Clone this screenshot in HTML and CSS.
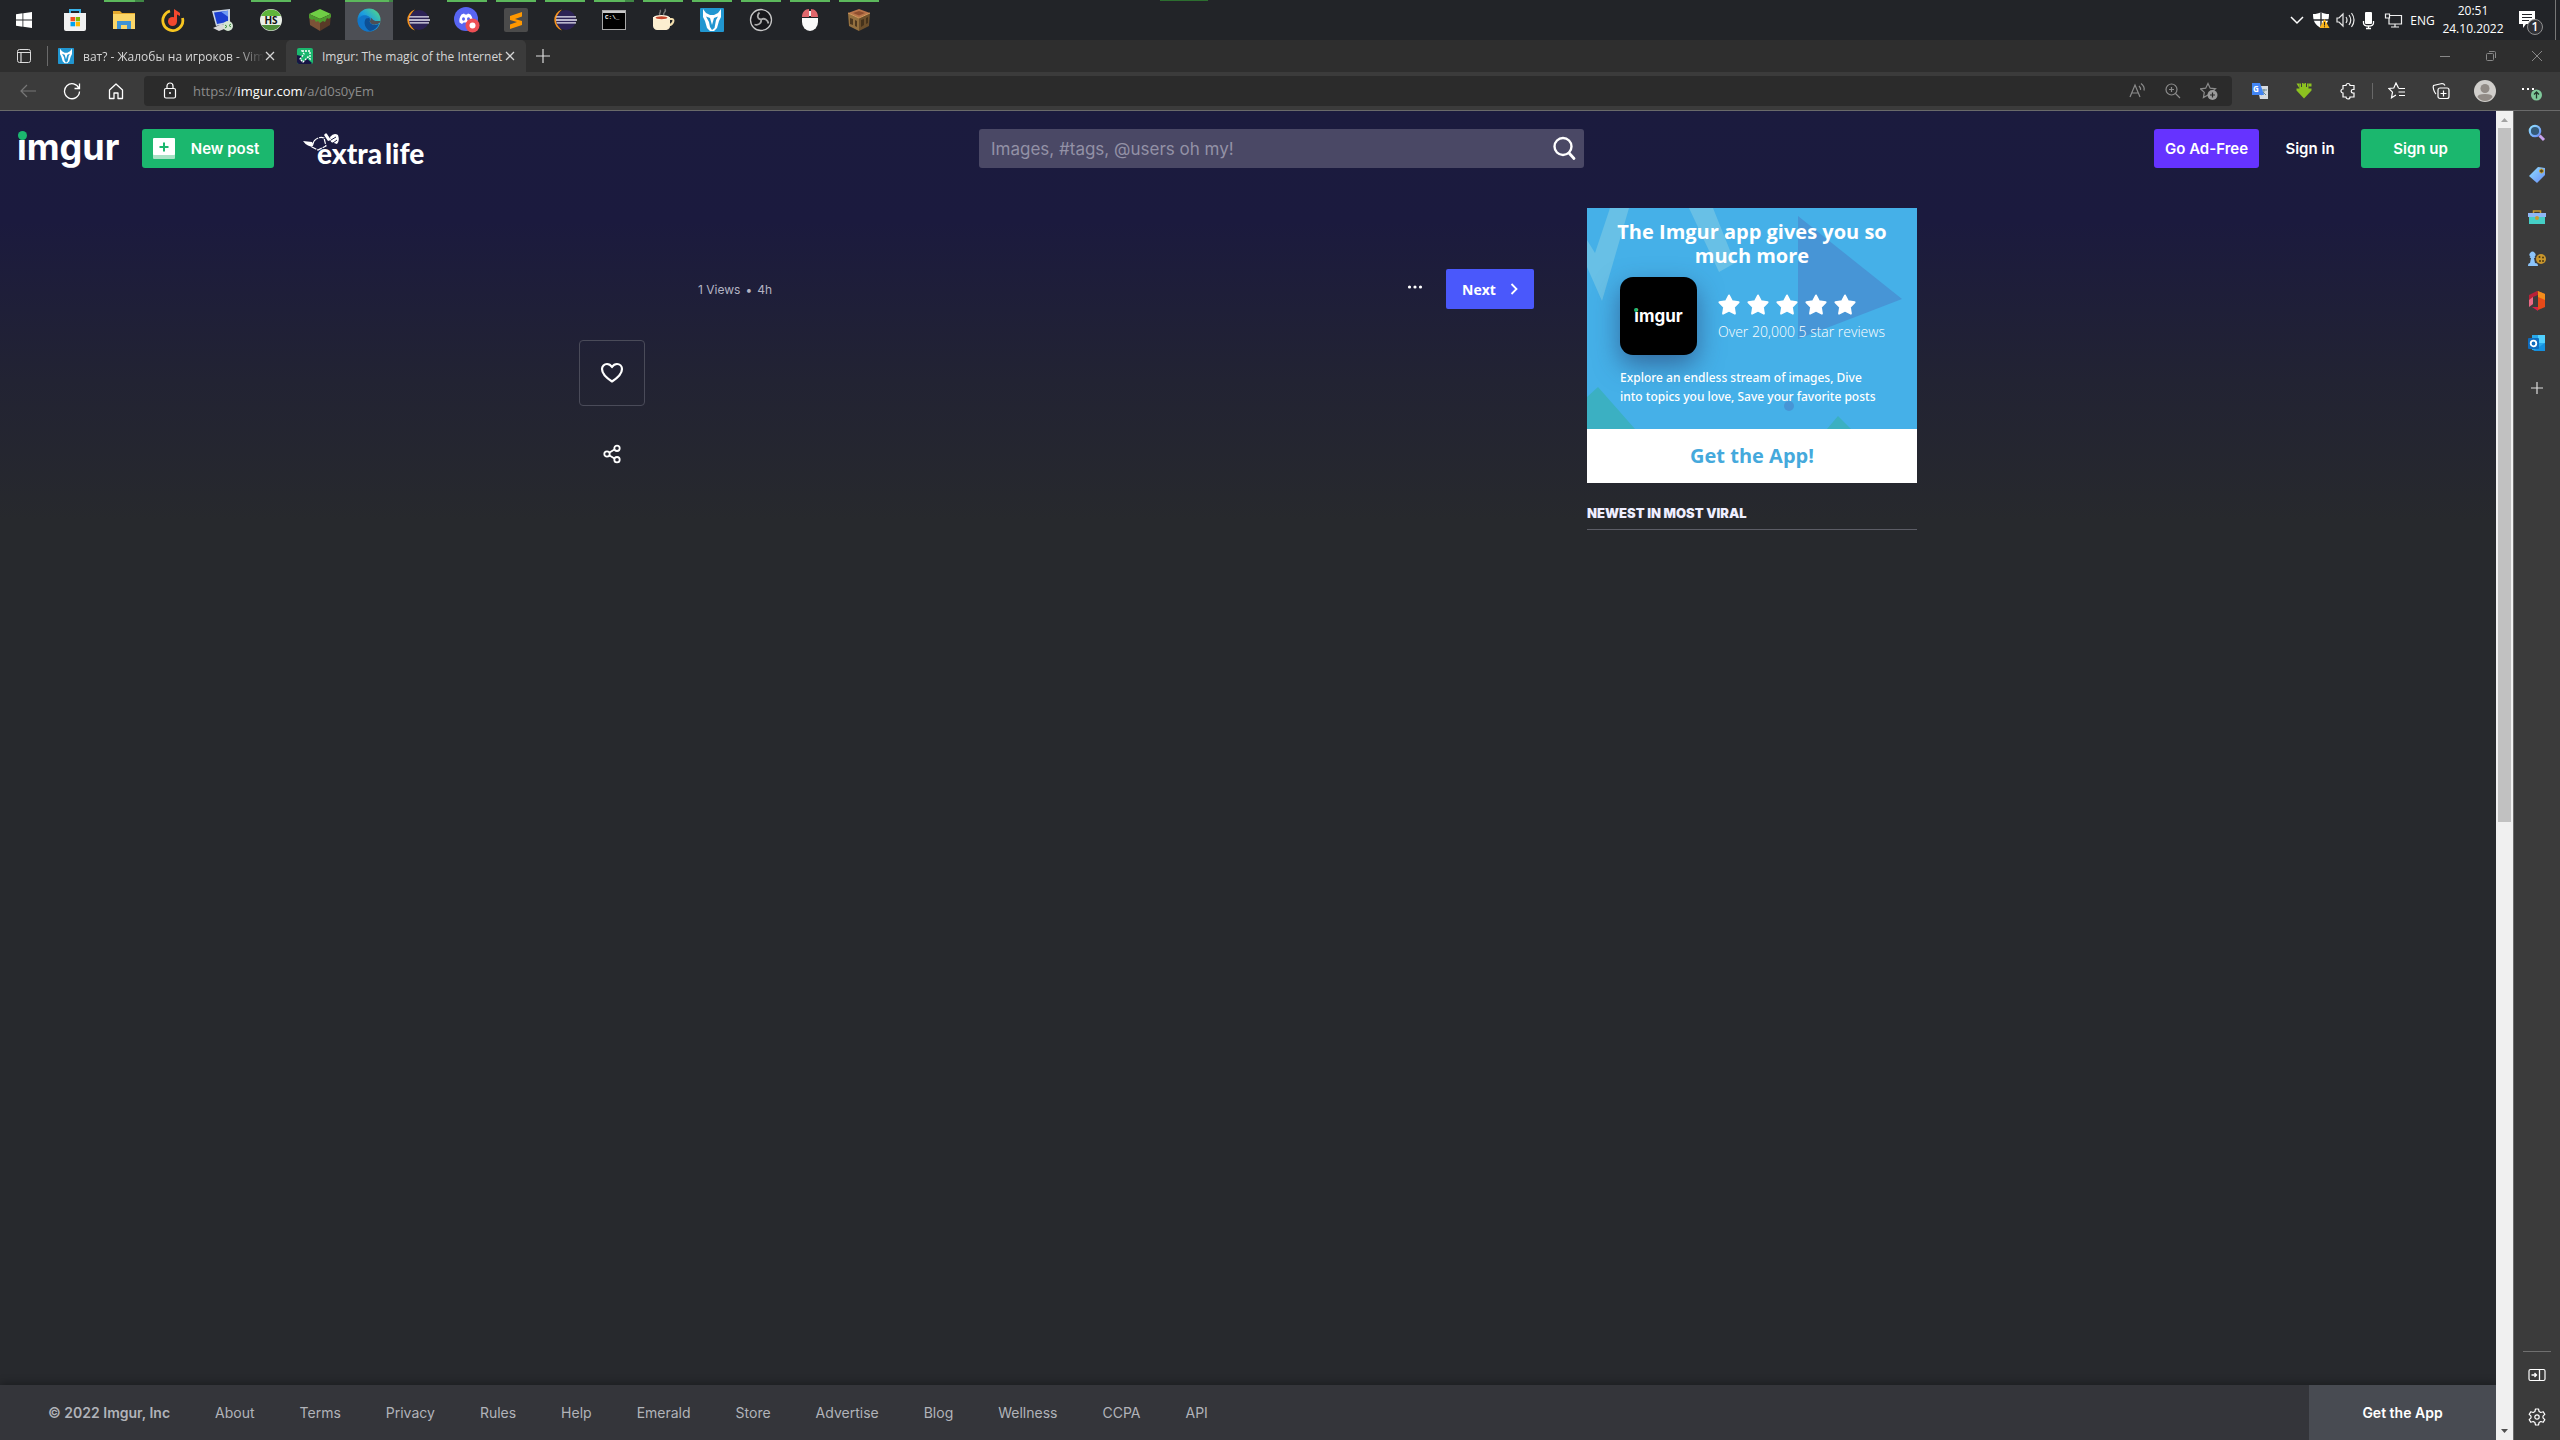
FILE: index.html
```html
<!DOCTYPE html>
<html lang="en">
<head>
<meta charset="utf-8">
<title>Imgur: The magic of the Internet</title>
<link rel="stylesheet" href="styles.css">
</head>
<body>
<svg class="defs" aria-hidden="true">
  <defs>
    <symbol id="eclipse" viewBox="0 0 24 24"><path d="M9 1.500a11 11 0 0 0 0 21a14 14 0 0 1 0-21z" fill="#f7941e"/><circle cx="13" cy="12" r="10" fill="#2c2255"/><path d="M3.500 8.300h19.500v1.300H3zM3 11.200h21v1.500H3zM3.500 14.300h19.500v1.300H4z" fill="#e8e6f2"/></symbol>
    <symbol id="vime" viewBox="0 0 24 24"><rect width="24" height="24" rx="1" fill="#2196d0"/><path d="M3 1l3 4 4 2h4l4-2 3-4v8l-2 4-2 7-3 3h-4l-3-3-2-7-2-4z" fill="#fff"/><path d="M6 8.500l4 1.500 2 7 2-7 4-1.500-2 3.500-1.500 8-2.500 2-2-3-1-5z" fill="#2196d0"/></symbol>
    <symbol id="star" viewBox="0 0 24 24"><path d="M12 1.500l3.300 6.400 7.200 1.100-5.100 5.200 1.100 7.300L12 18.200l-6.500 3.300 1.100-7.300L1.500 9l7.200-1.100z" fill="#fff" stroke="#fff" stroke-width="2" stroke-linejoin="round"/></symbol>
    <symbol id="close" viewBox="0 0 10 10"><path d="M1 1l8 8M9 1L1 9" stroke="currentColor" stroke-width="1.300" fill="none"/></symbol>
    <linearGradient id="edge" x1="0" y1="1" x2="1" y2="0"><stop offset="0" stop-color="#0c59a4"/><stop offset=".5" stop-color="#1b9de2"/><stop offset="1" stop-color="#5be07a"/></linearGradient>
    <linearGradient id="sky" x1="0" y1="0" x2="1" y2="1"><stop offset="0" stop-color="#8fe0ff"/><stop offset="1" stop-color="#6a8df5"/></linearGradient>
  </defs>
</svg>

<header class="taskbar">
  <nav class="apps" aria-label="Taskbar">
    <button class="app" aria-label="Start"><svg width="16" height="16" viewBox="0 0 16 16"><path d="M0 2.200l6.500-.9v6.200H0zM7.300 1.200L16 0v7.500H7.300zM0 8.400h6.500v6.300L0 13.800zM7.300 8.400H16V16l-8.700-1.200z" fill="#fff"/></svg></button>
    <button class="app" aria-label="Store"><svg width="24" height="24" viewBox="0 0 24 24"><path d="M7 6V2h10v4" fill="none" stroke="#39b3e8" stroke-width="2"/><path d="M1 5h22v16a2 2 0 0 1-2 2H3a2 2 0 0 1-2-2z" fill="#f1f1f1"/><path d="M7.500 9H12v4.300H7.500z" fill="#f05022"/><path d="M12.700 9H17v4.300h-4.300z" fill="#7fba00"/><path d="M7.500 14H12v4.300H7.500z" fill="#00a4ef"/><path d="M12.700 14H17v4.300h-4.300z" fill="#ffb900"/></svg></button>
    <button class="app run multi" aria-label="Explorer"><svg width="24" height="24" viewBox="0 0 24 24"><path d="M1 3h7l2 2h13v5H1z" fill="#e5a92d"/><path d="M1 6h22v15H1z" fill="#fbd668"/><path d="M5 21v-8h14v8h-4v-4H9v4z" fill="#3f93d6"/></svg></button>
    <button class="app" aria-label="Music"><svg width="24" height="24" viewBox="0 0 24 24"><path d="M9 3A10 10 0 1 0 21.500 10" fill="none" stroke="#f7c520" stroke-width="2.800"/><circle cx="11.500" cy="13.500" r="4.500" fill="#f4482e"/><path d="M13 14V1l6 4v3l-3-1.500v7z" fill="#f4482e"/></svg></button>
    <button class="app" aria-label="Remote desktop"><svg width="24" height="24" viewBox="0 0 24 24"><path d="M2 3l18-2v14L6 18z" fill="#c9d4e4"/><path d="M4 4.500l14-1.700v11L7 16z" fill="#1c3fd0"/><path d="M11 3.700l7-.9v6z" fill="#6f9bf3"/><path d="M3 20l9-4 5 4-8 3z" fill="#d8d8d8"/><circle cx="18" cy="18" r="5" fill="#d5e6d2"/><path d="M15 17l2 1.500-2 1.500M21 16l-2 1.500 2 1.500" stroke="#3a8b3a" fill="none"/></svg></button>
    <button class="app run" aria-label="HS"><svg width="24" height="24" viewBox="0 0 24 24"><circle cx="12" cy="12" r="11" fill="#e9efe6"/><path d="M2 8a11 11 0 0 1 20 0z" fill="#5fb63b"/><path d="M2.500 17a11 11 0 0 0 19 0z" fill="#4e8e3a"/><text x="12" y="16" text-anchor="middle" class="hs">HS</text></svg></button>
    <button class="app" aria-label="Minecraft"><svg width="24" height="24" viewBox="0 0 24 24"><path d="M12 1l11 5-11 5L1 6z" fill="#6fce45"/><path d="M1 6l11 5v12L2 17z" fill="#7c5237"/><path d="M23 6l-11 5v12l10-6z" fill="#593a27"/><path d="M1 6l11 5v4l-2-2-2 1-2-3-2 1-3-2zM23 6l-11 5v4l3-2 2 1 2-4 2 1 2-2z" fill="#4c9c2e"/></svg></button>
    <button class="app run active" aria-label="Edge"><svg width="24" height="24" viewBox="0 0 24 24"><circle cx="12" cy="12" r="11.500" fill="url(#edge)"/><path d="M.7 13C2 7 9 6 12.500 9c2 2 1 3 0 4.500 1 4 6 4.500 9.500 2.500-3 7-11 9-16 6-3.500-2-5.500-6-5.300-9z" fill="#1175c9"/><path d="M9 10.500c-3 4-1 10 4 12.500 4-.5 7-3 9-7-4 2-9 1-9.500-2.500.8-1 .4-3-.5-3.500z" fill="#0d4f95"/><path d="M12.500 13.500c1-1.500 2-2.500 1-4 2 1.500 3 3 5 3.500h5c0 3-7 5-9.500 2.500z" fill="#4d4f55"/></svg></button>
    <button class="app" aria-label="Eclipse"><svg width="24" height="24"><use href="#eclipse"/></svg></button>
    <button class="app run" aria-label="Discord"><svg width="26" height="26" viewBox="0 0 26 26"><circle cx="12" cy="12" r="12" fill="#5865f2"/><path d="M7.500 7.500l2.500-1 1 1h2l1-1 2.500 1c2 3 2.500 5 2 8l-2.500 1.500-1.500-1.500h-5L8 17l-2.500-1.500c-.5-3 0-5 2-8z" fill="#fff"/><ellipse cx="9.500" cy="12" rx="1.500" ry="1.800" fill="#5865f2"/><ellipse cx="14.500" cy="12" rx="1.500" ry="1.800" fill="#5865f2"/><circle cx="18.500" cy="18.500" r="7" fill="#ed4f54"/><circle cx="18.500" cy="18.500" r="3" fill="#fff"/></svg></button>
    <button class="app run" aria-label="Sublime Text"><svg width="24" height="24" viewBox="0 0 24 24"><rect width="24" height="24" rx="2" fill="#4b4b4b"/><path d="M6 8l12-4v4.500L11 11l7 2v4L6 21v-4.500l7-2.500-7-2z" fill="#ff9800"/></svg></button>
    <button class="app run" aria-label="Eclipse workspace"><svg width="24" height="24"><use href="#eclipse"/></svg></button>
    <button class="app run multi" aria-label="Terminal"><svg width="24" height="20" viewBox="0 0 24 20"><rect x=".5" y=".5" width="23" height="19" fill="#000" stroke="#a8a8a8"/><path d="M1 1h22v2H1z" fill="#c9c9c9"/><text x="3" y="9" class="cmd">C:\_</text></svg></button>
    <button class="app run" aria-label="Java"><svg width="24" height="24" viewBox="0 0 24 24"><path d="M9 7c-2-2 2-3 0-5M13 7c-2-2 3-3 1-6" stroke="#777" fill="none" stroke-width="1.500"/><path d="M18 11h3c3 0 1 6-3 6" fill="none" stroke="#f3dfae" stroke-width="2"/><path d="M2 9h17v9c0 3-3 4-4 4H6c-2 0-4-2-4-4z" fill="#fbeed0"/><ellipse cx="10.500" cy="9.500" rx="8" ry="2.500" fill="#fff6e0"/><ellipse cx="10.500" cy="9.700" rx="6" ry="1.500" fill="#c4452a"/></svg></button>
    <button class="app run" aria-label="VimeWorld"><svg width="24" height="24"><use href="#vime"/></svg></button>
    <button class="app run" aria-label="OBS"><svg width="24" height="24" viewBox="0 0 24 24"><circle cx="12" cy="12" r="10.500" fill="#17171b" stroke="#c7c7c7" stroke-width="1.300"/><path d="M12 11.500C8 11 8 7 10.500 4.500M12 11.500c3.500-2 7 .5 7.500 4M12 11.500c1 4-3 6-6.500 5" stroke="#aaa" fill="none" stroke-width="1.800"/></svg></button>
    <button class="app run" aria-label="Mouse"><svg width="24" height="24" viewBox="0 0 24 24"><path d="M4 10h16v4a8 9 0 0 1-16 0z" fill="#fafafa"/><path d="M4 9c0-5 3-8 7-8v8zM20 9c0-5-3-8-7-8v8z" fill="#e0676c"/><path d="M11 3h2v5h-2z" fill="#eee"/></svg></button>
    <button class="app run" aria-label="Crafting"><svg width="24" height="24" viewBox="0 0 24 24"><path d="M12 1l11 4-11 5L1 5z" fill="#b9744a"/><path d="M1 5l11 5v13L2 18z" fill="#94703f"/><path d="M23 5l-11 5v13l10-5z" fill="#6c4f2b"/><path d="M3 10l3 1v6l-3-1zM8 12l2 1v6l-2-1zM14 12l3-1v6l-3 2zM19 10l2-1v6l-2 1z" fill="#3c2b18" opacity=".8"/><path d="M6 5l6-2 6 2-6 2.500z" fill="#8f4f30"/><path d="M1 5l11 5 11-5" stroke="#d49a5c" fill="none"/></svg></button>
  </nav>
  <span class="progress"></span>
  <div class="tray">
    <svg width="24" height="24" viewBox="0 0 24 24"><path d="M6 9l6 6 6-6" stroke="#fff" stroke-width="1.500" fill="none"/></svg>
    <svg width="24" height="24" viewBox="0 0 24 24"><path d="M12 4c2 1.500 5 2 8 2 0 7-2 11-8 14-6-3-8-7-8-14 3 0 6-.5 8-2z" fill="#fff"/><path d="M12 4v16M4 12h16" stroke="#222428" stroke-width="1.300"/><path d="M15.500 11l5 9h-10z" fill="#f9b21b"/><path d="M15.500 14v3.500m0 .8v1" stroke="#222"/></svg>
    <svg width="24" height="24" viewBox="0 0 24 24"><path d="M4 10h2l4-4v12l-4-4H4zM13 9q2 3 0 6M16 7q3.500 5 0 10M18.500 5q5 7 0 14" stroke="#e8e8e8" fill="none" stroke-width="1.200"/></svg>
    <svg width="24" height="24" viewBox="0 0 24 24"><rect x="8" y="4" width="7" height="12" rx="1" fill="#fff"/><path d="M6.500 13v2q0 3 5 3t5-3v-2M11.500 18v2M9 20.500h5" stroke="#fff" fill="none" stroke-width="1.300"/></svg>
    <svg width="24" height="24" viewBox="0 0 24 24"><path d="M9 7.500h11.500v8.500H8v-6M4.500 6h4v4h-4zM14 16v3M10 19h8" stroke="#f0f0f0" fill="none" stroke-width="1.200"/></svg>
    <span class="lang">ENG</span>
    <time class="clock" datetime="2022-10-24T20:51">20:51<br>24.10.2022</time>
    <button class="notify" aria-label="Notifications"><svg width="26" height="26" viewBox="0 0 26 26"><path d="M1 1h16v13H8l-3 4v-4H1z" fill="#fff"/><path d="M4 4.500h10M4 7.500h10M4 10.500h7" stroke="#222428"/><circle cx="17" cy="17" r="7.500" fill="#303136" stroke="#909090"/><text x="17" y="21" text-anchor="middle" class="count">1</text></svg></button>
  </div>
</header>

<div class="tabs">
  <button class="actions" aria-label="Tab actions"><svg width="16" height="16" viewBox="0 0 16 16"><rect x="1.500" y="1.500" width="13" height="13" rx="2" stroke="#ddd" fill="none"/><path d="M1.500 4.500h13M5 4.500v10" stroke="#ddd" stroke-width="1.200"/></svg></button>
  <div class="tab">
    <svg width="16" height="16"><use href="#vime"/></svg>
    <span class="tab-title fade" lang="ru">ват? - Жалобы на игроков - Vim</span>
    <button aria-label="Close tab"><svg width="10" height="10"><use href="#close"/></svg></button>
  </div>
  <div class="tab current">
    <svg width="16" height="16" viewBox="0 0 16 16"><rect width="16" height="16" rx="2" fill="#1bb76e"/><path d="M0 7l8 2 7 6-1 1H2a2 2 0 0 1-2-2z" fill="#171544"/><path d="M5 3h8v8l-2-2-5 5-3-3 4-5z" fill="#1bb76e" stroke="#fff" stroke-width="1.300" stroke-dasharray="2 1"/></svg>
    <span class="tab-title">Imgur: The magic of the Internet</span>
    <button aria-label="Close tab"><svg width="10" height="10"><use href="#close"/></svg></button>
  </div>
  <button class="new-tab" aria-label="New tab"><svg width="16" height="16" viewBox="0 0 16 16"><path d="M8 1v14M1 8h14" stroke="#ddd" stroke-width="1.200"/></svg></button>
  <div class="window-buttons">
    <button aria-label="Minimize"><svg width="12" height="12" viewBox="0 0 12 12"><path d="M1 6.500h10" stroke="#888"/></svg></button>
    <button aria-label="Restore"><svg width="12" height="12" viewBox="0 0 12 12"><rect x="1.500" y="3.500" width="7" height="7" rx="1" fill="none" stroke="#888"/><path d="M4 1.500h5.500a1 1 0 0 1 1 1V8" fill="none" stroke="#888"/></svg></button>
    <button aria-label="Close"><svg width="12" height="12" viewBox="0 0 12 12"><path d="M1 1l10 10M11 1L1 11" stroke="#888"/></svg></button>
  </div>
</div>

<div class="toolbar">
  <button class="tool" aria-label="Back"><svg width="18" height="18" viewBox="0 0 18 18"><path d="M17 9H2M8 3L2 9l6 6" stroke="#777" fill="none" stroke-width="1.200"/></svg></button>
  <button class="tool" aria-label="Reload"><svg width="18" height="18" viewBox="0 0 18 18"><path d="M16 6.500a7.500 7.500 0 1 0 .5 3M16.500 1.500v5h-5" stroke="#fff" fill="none" stroke-width="1.300"/></svg></button>
  <button class="tool" aria-label="Home"><svg width="18" height="18" viewBox="0 0 18 18"><path d="M2.500 8L9 2l6.500 6v8.500H11V11H7v5.500H2.500z" stroke="#fff" fill="none" stroke-width="1.300" stroke-linejoin="round"/></svg></button>
  <div class="address">
    <svg class="lock" width="18" height="18" viewBox="0 0 18 18"><rect x="3.500" y="6.500" width="11" height="9.500" rx="1.500" stroke="#fff" fill="none" stroke-width="1.200"/><path d="M6 6.500V4a3 3 0 0 1 6 0v2.500" stroke="#fff" fill="none" stroke-width="1.200"/><circle cx="9" cy="11" r="1" fill="#fff"/></svg>
    <span class="url">https://<b>imgur.com</b>/a/d0s0yEm</span>
    <button aria-label="Read aloud"><svg width="18" height="18" viewBox="0 0 18 18"><path d="M2 15L7 3l5 12M4 11h6M11 4q2 2 1.500 4M13 1.500q4 3 3 7" stroke="#8b8b8b" fill="none" stroke-width="1.200"/></svg></button>
    <button aria-label="Zoom"><svg width="18" height="18" viewBox="0 0 18 18"><circle cx="7.500" cy="7.500" r="5.500" stroke="#8b8b8b" fill="none" stroke-width="1.200"/><path d="M11.500 11.500L16 16M7.500 5v5M5 7.500h5" stroke="#8b8b8b" stroke-width="1.200"/></svg></button>
    <button aria-label="Add favourite"><svg width="18" height="18" viewBox="0 0 18 18"><path d="M8 1.500l2.200 4.700 5.300.6-4 3.600 1 5.100L8 13l-4.600 2.600.9-5.200-3.800-3.600 5.200-.6z" stroke="#8b8b8b" fill="none" stroke-width="1.200"/><circle cx="12.500" cy="13" r="5" fill="#9a9a9a"/><path d="M12.500 10.500v5M10 13h5" stroke="#2b2b2b" stroke-width="1.200"/></svg></button>
  </div>
  <button class="tool" aria-label="Translate"><svg width="18" height="18" viewBox="0 0 18 18"><path d="M6 4h11v13H9z" fill="#d7dbe0"/><path d="M10 8h6M13 7v1c0 3-1 4-3 5m2-3 3 3" stroke="#6a8a90" fill="none"/><path d="M1 1h8l4 12H1z" fill="#4285f4"/><text x="2" y="10" class="g">G</text></svg></button>
  <button class="tool" aria-label="Downloads"><svg width="18" height="18" viewBox="0 0 18 18"><path d="M1.500 1.500h3v5h-3l0 2 7.500 8 7.500-8v-2h-3v-5h3v3h-3v2h-1.500V1h-2v4H8V1H6v5.500H4.500z" fill="#8cc220"/><path d="M4.500 1.500h9v8h-9z" fill="#8cc220"/><path d="M6.500 1v4M11.500 1v4" stroke="#3b3b3b"/></svg></button>
  <button class="tool" aria-label="Extensions"><svg width="18" height="18" viewBox="0 0 18 18"><path d="M4 3.500h3a2 2 0 0 1 4 0h4v4h-1a1.700 1.700 0 0 0 0 3.500h1v4h-4a2 2 0 0 1-4 0H4v-4a2 2 0 0 1 0-4z" stroke="#fff" fill="none" stroke-width="1.200"/></svg></button>
  <span class="rule"></span>
  <button class="tool" aria-label="Favourites"><svg width="18" height="18" viewBox="0 0 18 18"><path d="M10.500 6L8 1 5.800 6l-5 .5 3.700 3.700-1 5.500L8 13M10.500 6.500H17M10.500 10H17M11 13.500h6" stroke="#fff" fill="none" stroke-width="1.200"/></svg></button>
  <button class="tool" aria-label="Collections"><svg width="18" height="18" viewBox="0 0 18 18"><rect x="6" y="6" width="11" height="10.500" rx="2" stroke="#fff" fill="none" stroke-width="1.200"/><path d="M11.500 8.500v6M8.500 11.500h6M4 12C2 10 .5 5 1.500 3.500L10 1.500q2 0 3 2" stroke="#fff" fill="none" stroke-width="1.200"/></svg></button>
  <button class="tool" aria-label="Profile"><svg width="22" height="22" viewBox="0 0 22 22"><circle cx="11" cy="11" r="11" fill="#d0cecb"/><circle cx="11" cy="8.500" r="4.500" fill="#918b86"/><path d="M3.500 17q0-3 7.500-3t7.500 3q-3 4-7.500 4t-7.500-4z" fill="#918b86"/></svg></button>
  <button class="tool more" aria-label="More"><svg width="22" height="22" viewBox="0 0 22 22"><path d="M2 9h2M7 9h2M12 9h2" stroke="#fff" stroke-width="2"/><circle cx="16.500" cy="15" r="5.500" fill="#7fc99a"/><path d="M16.500 18.500v-6M14 14.500l2.500-2.500 2.500 2.500" stroke="#23352a" fill="none" stroke-width="1.300"/></svg></button>
</div>

<div class="browser">
  <div class="page">
    <header class="site-header">
      <div class="brand">
        <a class="logo" href="#">imgur</a>
        <button class="new-post"><svg width="22" height="22" viewBox="0 0 22 22"><path d="M0 15h22v5a1 1 0 0 1-1 1H1a1 1 0 0 1-1-1z" fill="#a9e2c6"/><rect width="22" height="17" rx="1" fill="#fff"/><path d="M11 4.500v9M6.500 9h9" stroke="#1bb76e" stroke-width="2"/></svg>New post</button>
        <a class="extra" href="#"><svg width="38" height="22" viewBox="0 0 38 22"><path d="M0 9l9 1 3 5Q4 15 0 9z" fill="#fff"/><path d="M11 9q5-5 10-3l2 8-8 4-6-3z" fill="#1b1b40" stroke="#fff" stroke-width="1.200" stroke-dasharray="5 1"/><path d="M21 3q2-3 3-1l4 6-3 1zM27 5q4-5 8-2 2 6-1 9l-6-2z" fill="#fff"/><path d="M28 8l5-3M30 11l4-3M13 12l3 1M19 9l2 2" stroke="#1b1b40"/></svg><span>extra</span><span>life</span></a>
      </div>
      <form class="search">
        <input type="search" aria-label="Search" placeholder="Images, #tags, @users oh my!">
        <button type="button" aria-label="Submit search"><svg width="24" height="26" viewBox="0 0 24 26"><circle cx="11" cy="11.500" r="8.500" fill="none" stroke="#fff" stroke-width="2.400"/><path d="M17 18l5 5.500" stroke="#fff" stroke-width="2.800" stroke-linecap="round"/></svg></button>
      </form>
      <div class="account">
        <button class="ad-free">Go Ad-Free</button>
        <a class="sign-in" href="#">Sign in</a>
        <button class="sign-up">Sign up</button>
      </div>
    </header>

    <main class="gallery">
      <div class="engage">
        <button class="heart" aria-label="Favourite"><svg width="24" height="22" viewBox="0 0 24 22"><path d="M12 19.500Q2 13 2 7a5 5 0 0 1 5-5q3 0 5 3 2-3 5-3a5 5 0 0 1 5 5q0 6-10 12.500z" fill="none" stroke="#fff" stroke-width="2.200" stroke-linejoin="round"/></svg></button>
        <button class="share" aria-label="Share"><svg width="18" height="20" viewBox="0 0 18 20"><path d="M4 10l10-6M4 10l10 6" stroke="#fff" stroke-width="1.800"/><g fill="#23242f" stroke="#fff" stroke-width="1.800"><circle cx="4" cy="10" r="2.700"/><circle cx="14" cy="4.300" r="2.700"/><circle cx="14" cy="15.700" r="2.700"/></g></svg></button>
      </div>
      <section class="post">
        <p class="meta"><span>1 Views</span><span>•</span><span>4h</span></p>
        <button class="dots" aria-label="Options"><svg width="16" height="4" viewBox="0 0 16 4"><g fill="#fff"><circle cx="2.500" cy="2" r="1.600"/><circle cx="8" cy="2" r="1.600"/><circle cx="13.500" cy="2" r="1.600"/></g></svg></button>
        <button class="next">Next<svg width="8" height="12" viewBox="0 0 8 12"><path d="M1.500 1l5 5-5 5" stroke="#fff" stroke-width="1.800" fill="none"/></svg></button>
      </section>
      <aside class="side">
        <a class="promo" href="#">
          <div class="promo-art">
            <svg class="shapes" viewBox="0 0 330 221" preserveAspectRatio="none" aria-hidden="true"><path d="M0 32l8 13L23 0h19L15 93 0 59zM102 0h24l22 55-16 9z" fill="#68c0e6"/><path d="M211 8l104 83-104 40z" fill="#4795d6"/><path d="M0 189l11-10 37 42H0zM240 221l11-13 13 13z" fill="#3bb0c2"/><circle cx="202" cy="198" r="5" fill="#4795d6"/></svg>
            <h2>The Imgur app gives you so much more</h2>
            <div class="rating">
              <span class="app-icon"><span class="logo small">imgur</span></span>
              <div>
                <div class="stars"><svg width="22" height="22"><use href="#star"/></svg><svg width="22" height="22"><use href="#star"/></svg><svg width="22" height="22"><use href="#star"/></svg><svg width="22" height="22"><use href="#star"/></svg><svg width="22" height="22"><use href="#star"/></svg></div>
                <p class="reviews">Over 20,000 5 star reviews</p>
              </div>
            </div>
            <p class="blurb">Explore an endless stream of images, Dive into topics you love, Save your favorite posts</p>
          </div>
          <strong class="promo-cta">Get the App!</strong>
        </a>
        <h3>NEWEST IN MOST VIRAL</h3>
      </aside>
    </main>

    <footer class="site-footer">
      <nav>
        <b>© 2022 Imgur, Inc</b>
        <a href="#">About</a><a href="#">Terms</a><a href="#">Privacy</a><a href="#">Rules</a><a href="#">Help</a><a href="#">Emerald</a><a href="#">Store</a><a href="#">Advertise</a><a href="#">Blog</a><a href="#">Wellness</a><a href="#">CCPA</a><a href="#">API</a>
      </nav>
      <button class="get-app">Get the App</button>
    </footer>
  </div>

  <div class="scrollbar" aria-hidden="true">
    <svg width="17" height="17" viewBox="0 0 17 17"><path d="M5 11h7L8.500 7z" fill="#a3a3a3"/></svg>
    <span class="thumb"></span>
    <span class="track"></span>
    <svg width="17" height="17" viewBox="0 0 17 17"><path d="M5 6h7l-3.500 4z" fill="#505050"/></svg>
  </div>

  <nav class="sidebar" aria-label="Sidebar">
    <button aria-label="Search"><svg width="18" height="18" viewBox="0 0 18 18"><circle cx="7" cy="7" r="5.200" fill="#345a78" stroke="url(#sky)" stroke-width="2.200"/><path d="M11.500 11.500l4.500 4.500" stroke="#c9a2ee" stroke-width="3"/></svg></button>
    <button aria-label="Shopping"><svg width="18" height="18" viewBox="0 0 18 18"><path d="M10 1l7 1v7l-8 8-8-7z" fill="url(#sky)"/><circle cx="13.500" cy="5" r="2" fill="#5b4a1c" stroke="#c9a53b"/></svg></button>
    <button aria-label="Tools"><svg width="18" height="18" viewBox="0 0 18 18"><path d="M5.500 5V3h7v2" fill="none" stroke="#c99a30" stroke-width="1.500"/><path d="M1 9h16v7H1z" fill="#45cfc6"/><path d="M0 5h18v4H0z" fill="#8fb7f5"/><circle cx="9" cy="10" r="2" fill="#c99a30"/></svg></button>
    <button aria-label="Games"><svg width="18" height="18" viewBox="0 0 18 18"><circle cx="13" cy="9" r="5" fill="#c9962c"/><g fill="#4d3a12"><circle cx="11.500" cy="7" r="1"/><circle cx="15" cy="7.500" r="1"/><circle cx="12" cy="11" r="1"/><circle cx="15" cy="11" r="1"/></g><path d="M0 16q0-3 2-3l1-5H1.500l1-1a3 3 0 1 1 4 0l1 1H6l1 5q3 0 3 3z" fill="#8cc4fa"/></svg></button>
    <button aria-label="Office"><svg width="18" height="20" viewBox="0 0 18 20"><path d="M9 0l8 3v13l-7 3V4z" fill="#e64a19"/><path d="M10 0l7 3v6l-7-3z" fill="#f28c1c"/><path d="M9 0L1 4v11l4-2V6l5-2z" fill="#b92137"/><path d="M1 9l4-3v7l-4 3z" fill="#ea6a86"/><path d="M4 16l6 0v4z" fill="#d81f48"/></svg></button>
    <button aria-label="Outlook"><svg width="18" height="18" viewBox="0 0 18 18"><path d="M4 1h13v15H4z" fill="#28a8ea"/><path d="M10 1h7v8h-7z" fill="#50d0ff"/><path d="M5 17l12-8v8z" fill="#1490df"/><rect x="0" y="4" width="11" height="11" rx="1" fill="#0f6cbd"/><circle cx="5.500" cy="9.500" r="2.800" fill="none" stroke="#fff" stroke-width="1.800"/></svg></button>
    <button class="add" aria-label="Add"><svg width="14" height="14" viewBox="0 0 14 14"><path d="M7 1v12M1 7h12" stroke="#ddd" stroke-width="1.200"/></svg></button>
    <div class="sidebar-end">
      <button aria-label="Hide sidebar"><svg width="18" height="14" viewBox="0 0 18 14"><rect x="1" y="1.500" width="16" height="11" rx="1.500" stroke="#fff" fill="none" stroke-width="1.200"/><path d="M11.500 1.500v11M3.500 7h5M6.500 5l2 2-2 2" stroke="#fff" fill="none" stroke-width="1.300"/></svg></button>
      <button aria-label="Settings"><svg width="18" height="18" viewBox="0 0 18 18"><path d="M7.500 1h3l.6 2.500 1.700 1 2.400-.8 1.600 2.700L15 8.200v1.600l1.800 1.800-1.600 2.700-2.400-.8-1.700 1-.6 2.500h-3l-.6-2.500-1.700-1-2.400.8-1.600-2.700L3 9.800V8.200L1.200 6.400l1.600-2.700 2.400.8 1.700-1z" stroke="#fff" fill="none" stroke-width="1.200" stroke-linejoin="round"/><circle cx="9" cy="9" r="2.200" stroke="#fff" fill="none" stroke-width="1.200"/></svg></button>
    </div>
  </nav>
</div>
</body>
</html>
```
FILE: styles.css
```css
* { box-sizing: border-box; }
body {
  margin: 0;
  min-height: 100vh;
  display: flex;
  flex-direction: column;
  background: #27292d;
  color: #fff;
  font-family: Inter, "Liberation Sans", sans-serif;
  font-size: 14px;
}
button {
  display: flex;
  align-items: center;
  justify-content: center;
  padding: 0;
  border: 0;
  background: none;
  color: inherit;
  font: inherit;
}
a { color: inherit; text-decoration: none; }
h2, h3, p { margin: 0; }
svg { display: block; flex: none; }
.defs { position: absolute; width: 0; height: 0; }

/* Taskbar */
.taskbar {
  position: relative;
  display: flex;
  justify-content: space-between;
  height: 40px;
  background: #222428;
  font-family: "Open Sans", "Noto Sans", sans-serif;
  font-size: 12px;
}
.apps { display: flex; gap: 1px; }
.app { width: 48px; height: 40px; padding-bottom: 2px; border-top: 2px solid transparent; }
.app:first-child { margin-right: 2px; }
.app.run {
  border-image: linear-gradient(to right, transparent 4px, #5cb85c 4px, #5cb85c 44px, transparent 44px) 2 0 0 0;
}
.app.multi {
  border-image: linear-gradient(to right, transparent 4px, #5cb85c 4px, #5cb85c 35px, #3f8745 35px, #3f8745 44px, transparent 44px) 2 0 0 0;
}
.app.active { background: #4d4f55; border-image: linear-gradient(to right, #5cb85c 44px, #3f8745 44px) 2 0 0 0; }
.hs { font: 700 10px "Open Sans", sans-serif; fill: #111; }
.cmd { font: 700 6px "Liberation Mono", monospace; fill: #fff; }
.g { font: 700 8px "Open Sans", sans-serif; fill: #fff; }
.count { font: 600 12px "Open Sans", sans-serif; fill: #fff; }
.progress { position: absolute; top: 0; left: 1160px; width: 48px; height: 1px; background: #2c6e2f; }
.tray { display: flex; align-items: center; padding-right: 4px; }
.lang { width: 35px; text-align: center; }
.clock { width: 66px; text-align: center; line-height: 18px; }
.notify { width: 50px; height: 40px; padding-top: 6px; border-right: 1px solid #777; }

/* Tab strip */
.tabs {
  display: flex;
  height: 32px;
  background: #2e2e2e;
  color: #d6d6d6;
  font-family: "Open Sans", "Noto Sans", sans-serif;
  font-size: 12px;
}
.actions { width: 48px; position: relative; }
.actions::after { content: ""; position: absolute; right: 0; top: 6px; width: 1px; height: 20px; background: #6a6a6a; }
.tab { display: flex; align-items: center; width: 238px; padding: 0 10px; }
.tab.current { width: 240px; padding-left: 11px; background: #3b3b3b; border-radius: 5px 5px 0 0; }
.tab-title { flex: 1; margin-left: 9px; white-space: nowrap; }
.tab button { width: 12px; height: 20px; }
.fade { overflow: hidden; -webkit-mask-image: linear-gradient(to right, #000 85%, transparent); mask-image: linear-gradient(to right, #000 85%, transparent); }
.new-tab { width: 34px; }
.window-buttons { display: flex; margin-left: auto; }
.window-buttons button { width: 46px; }

/* Toolbar */
.toolbar {
  display: flex;
  align-items: center;
  height: 39px;
  padding: 0 5px 0 6px;
  background: #3b3b3b;
  border-bottom: 1px solid #6a6a6a;
}
.tool { width: 44px; height: 36px; }
.tool.more { width: 48px; }
.address {
  flex: 1;
  display: flex;
  align-items: center;
  height: 30px;
  margin: 0 6px;
  padding: 0 5px 0 17px;
  border-radius: 4px;
  background: #2b2b2b;
}
.address button { width: 36px; height: 30px; }
.url { flex: 1; margin-left: 14px; color: #8b8b8b; font-family: "Open Sans", "Noto Sans", sans-serif; font-size: 13px; }
.url b { color: #fff; font-weight: 400; }
.rule { width: 1px; height: 16px; margin: 0 2px; background: #686868; }

/* Browser window */
.browser { flex: 1; display: flex; }
.page {
  flex: 1;
  display: flex;
  flex-direction: column;
  background: linear-gradient(#1b1b3e 0, #1b1a3e 110px, #222333 270px, #27292d 410px);
}
.site-header {
  display: flex;
  align-items: center;
  justify-content: space-between;
  padding: 18px 16px 0 17px;
  font-size: 15px;
  font-weight: 600;
}
.brand { display: flex; align-items: center; height: 39px; }
.logo {
  position: relative;
  width: 125px;
  padding-bottom: 4px;
  font-family: Inter, sans-serif;
  font-size: 36px;
  font-weight: 700;
  line-height: 40px;
}
.logo::before {
  content: "";
  position: absolute;
  left: 1px;
  top: 4px;
  width: 9px;
  height: 9px;
  border-radius: 50%;
  background: #1bb76e;
}
.new-post {
  gap: 16px;
  width: 132px;
  height: 39px;
  padding-right: 4px;
  border-radius: 3px;
  background: #1bb76e;
}
.extra {
  position: relative;
  display: flex;
  gap: 3px;
  width: 135px;
  padding: 10px 0 0 43px;
  font-family: Lato, sans-serif;
  font-size: 28px;
  font-weight: 900;
  line-height: 33px;
  white-space: nowrap;
}
.extra svg { position: absolute; left: 29px; top: 5px; }
.search { position: relative; display: flex; width: 605px; }
.search input {
  width: 100%;
  height: 39px;
  padding: 0 50px 0 12px;
  border: 0;
  border-radius: 3px;
  background: #4a4865;
  color: #fff;
  font: 400 17px Inter, sans-serif;
}
.search input::placeholder { color: #9391a6; }
.search button { position: absolute; right: 8px; top: 6px; }
.account { display: flex; align-items: center; }
.ad-free, .sign-up { height: 39px; border-radius: 3px; }
.ad-free { width: 105px; background: #6633ff; }
.sign-in { width: 102px; text-align: center; }
.sign-up { width: 119px; background: #1bb76e; }

/* Post */
.gallery {
  flex: 1;
  display: grid;
  grid-template-columns: 66px minmax(0, 836px) 330px;
  column-gap: 53px;
  align-items: start;
  justify-content: center;
  padding-top: 40px;
}
.engage { display: flex; flex-direction: column; align-items: center; gap: 36px; padding-top: 132px; }
.heart { width: 66px; height: 66px; border: 1px solid #4a4b59; border-radius: 4px; }
.share { width: 24px; height: 24px; }
.post { display: flex; align-items: center; padding-top: 61px; }
.meta { flex: 1; display: flex; gap: 5px; color: #b4b4c3; font-size: 12px; }
.dots { width: 24px; height: 24px; margin-right: 19px; padding-bottom: 4px; }
.next {
  gap: 14px;
  width: 88px;
  height: 40px;
  border-radius: 2px;
  background: #4a58fb;
  font-family: "Open Sans", sans-serif;
  font-weight: 700;
}
.promo { display: block; font-family: "Open Sans", sans-serif; }
.promo-art { position: relative; height: 221px; padding: 12px 30px 0 33px; background: #45b0e8; }
.promo-art > * { position: relative; }
.promo-art .shapes { position: absolute; inset: 0; width: 100%; height: 100%; }
.promo h2 { margin: 0 -8px 0 -11px; font-size: 20px; font-weight: 700; line-height: 24px; text-align: center; }
.rating { display: flex; gap: 21px; margin-top: 9px; }
.app-icon {
  display: flex;
  align-items: center;
  justify-content: center;
  width: 77px;
  height: 78px;
  border-radius: 13px;
  background: #000;
  box-shadow: 0 10px 26px rgba(40, 60, 110, .6);
}
.logo.small { width: auto; padding: 0; font-size: 17px; line-height: 20px; }
.logo.small::before { left: 0; top: 2px; width: 4px; height: 4px; }
.stars { display: flex; gap: 7px; padding-top: 17px; }
.reviews { margin-top: 6px; font-size: 14px; font-weight: 300; line-height: 20px; white-space: nowrap; }
.blurb { margin-top: 13px; font-family: "Noto Sans", sans-serif; font-size: 12px; font-weight: 500; line-height: 19px; }
.promo-cta {
  display: block;
  background: #fff;
  color: #45a9dc;
  font-size: 20px;
  line-height: 54px;
  text-align: center;
}
.side h3 {
  margin-top: 21px;
  padding-bottom: 6px;
  border-bottom: 1px solid #5c5d66;
  font-size: 13px;
  font-weight: 900;
  line-height: 19px;
  color: #eef;
}

/* Footer */
.site-footer {
  display: flex;
  justify-content: space-between;
  height: 55px;
  background: #34353a;
  box-shadow: 0 -2px 8px rgba(0, 0, 0, .3);
  color: #b1b3b9;
}
.site-footer nav { display: flex; align-items: center; gap: 45px; padding-left: 48px; }
.site-footer b { font-weight: 600; }
.get-app { width: 187px; background: #484b52; color: #fff; font-weight: 600; }

/* Scrollbar and sidebar */
.scrollbar { display: flex; flex-direction: column; width: 17px; background: #f0f0f0; }
.thumb { flex: 694; margin: 0 2px; background: #c1c1c1; }
.track { flex: 601; }
.sidebar {
  display: flex;
  flex-direction: column;
  align-items: center;
  width: 47px;
  padding-top: 1px;
  border-left: 1px solid #6a6a6a;
  background: #3b3b3b;
}
.sidebar button { width: 42px; height: 42px; }
.sidebar .add { height: 48px; }
.sidebar-end { margin: auto 0 2px; }
.sidebar-end::before { content: ""; display: block; width: 28px; height: 1px; margin: 0 auto 2px; background: #6f6f6f; }
```
